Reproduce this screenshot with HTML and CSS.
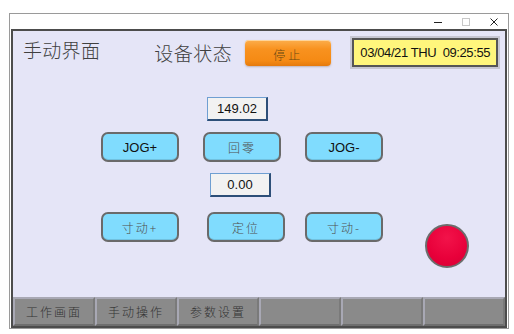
FILE: index.html
```html
<!DOCTYPE html>
<html lang="zh-CN">
<head>
  <meta charset="UTF-8">
  <title>手动界面</title>
  <link rel="stylesheet" href="styles.css">
</head>
<body>

<div class="window">
  <div class="titlebar">
    <svg class="tb-icon" width="10" height="10" viewBox="0 0 10 10"><line x1="1" y1="5.5" x2="9" y2="5.5" stroke="#222" stroke-width="1"/></svg>
    <svg class="tb-icon" width="10" height="10" viewBox="0 0 10 10"><rect x="1.5" y="1.5" width="7" height="7" fill="none" stroke="#c8c8c8" stroke-width="1"/></svg>
    <svg class="tb-icon" width="10" height="10" viewBox="0 0 10 10"><path d="M1.5 1.5 L8.5 8.5 M8.5 1.5 L1.5 8.5" stroke="#222" stroke-width="1"/></svg>
  </div>

  <div class="screen">
    <div class="top">
      <div class="page-title">手动界面</div>
      <div class="status-label">设备状态</div>
      <div class="status-btn">停止</div>
      <div class="clock-frame">
        <div class="clock">03/04/21 THU&nbsp;&nbsp;09:25:55</div>
      </div>
    </div>

    <div class="panel">
      <div class="row row-value1">
        <div class="value">149.02</div>
      </div>
      <div class="row row-jog">
        <div class="btn">JOG+</div>
        <div class="btn cn">回零</div>
        <div class="btn">JOG-</div>
      </div>
      <div class="row row-value2">
        <div class="value">0.00</div>
      </div>
      <div class="row row-inch">
        <div class="btn cn">寸动+</div>
        <div class="btn cn">定位</div>
        <div class="btn cn">寸动-</div>
        <div class="lamp"></div>
      </div>
    </div>

    <div class="tabs">
      <div class="tab">工作画面</div>
      <div class="tab">手动操作</div>
      <div class="tab">参数设置</div>
      <div class="tab"></div>
      <div class="tab"></div>
      <div class="tab"></div>
    </div>
  </div>
</div>

</body>
</html>
```

FILE: styles.css
```css
body {
  margin: 0;
  background: #ffffff;
  font-family: "Liberation Sans", Arial, "Noto Sans CJK SC", sans-serif;
}

.window {
  margin: 13px 0 0 9px;
  width: 498px;
  height: 314px;
  border: 1px solid #9a9a9a;
  background: #ffffff;
  display: flex;
  flex-direction: column;
}

.titlebar {
  height: 15px;
  display: flex;
  justify-content: flex-end;
  align-items: center;
  gap: 18px;
  padding-right: 9px;
}

.tb-icon {
  display: block;
}

.screen {
  flex: 1;
  margin: 0 1px;
  border: 2px solid #4c4c4c;
  background: #e5e5f7;
  display: flex;
  flex-direction: column;
}

/* header */
.top {
  height: 39px;
  display: flex;
  align-items: flex-start;
}

.page-title,
.status-label {
  font-family: "Noto Sans CJK SC", sans-serif;
  font-weight: 300;
  font-size: 19px;
  line-height: 22px;
  color: #404040;
}

.page-title {
  margin: 8px 0 0 10px;
  letter-spacing: 0.3px;
}

.status-label {
  margin: 11px 0 0 54px;
  letter-spacing: 0.5px;
}

.status-btn {
  margin: 9px 0 0 13px;
  width: 86px;
  height: 26px;
  border-radius: 4px;
  background: linear-gradient(#fcae4c, #f8921f 35%, #f58a14 80%, #e57a0c);
  box-shadow: 0 1px 2px rgba(120, 90, 60, 0.35), inset 0 1px 0 rgba(255, 230, 190, 0.7);
  display: flex;
  align-items: center;
  justify-content: center;
  padding-top: 2px;
  box-sizing: border-box;
  font-family: "Noto Sans CJK SC", sans-serif;
  font-weight: 300;
  font-size: 12px;
  letter-spacing: 3px;
  color: #6b4a12;
}

.clock-frame {
  margin: 5px 0 0 19px;
  padding: 2px;
  background: #c6c6d2;
}

.clock {
  width: 142px;
  height: 25px;
  border: 2px solid #555555;
  background: #fff67c;
  display: flex;
  align-items: center;
  justify-content: center;
  font-size: 13px;
  letter-spacing: -0.4px;
  color: #111;
}

/* controls */
.panel {
  padding-left: 88px;
  display: flex;
  flex-direction: column;
}

.row {
  display: flex;
  align-items: flex-start;
}

.row-value1 {
  margin: 27px 0 0 106px;
}

.row-jog {
  margin-top: 11px;
  gap: 24px;
}

.row-value2 {
  margin: 11px 0 0 109px;
}

.row-inch {
  margin-top: 15px;
}

.row-inch .btn:nth-child(2) {
  margin-left: 28px;
}

.row-inch .btn:nth-child(3) {
  margin-left: 20px;
}

.value {
  width: 58px;
  height: 21px;
  background: #f2f2f2;
  border-top: 1px solid #6f9fd2;
  border-left: 1px solid #6f9fd2;
  border-right: 2px solid #2d4f78;
  border-bottom: 2px solid #2d4f78;
  display: flex;
  align-items: center;
  justify-content: center;
  font-size: 13px;
  color: #111;
}

.btn {
  width: 74px;
  height: 26px;
  border: 2px solid #6a6a6a;
  border-radius: 7px;
  background: #80dcfe;
  box-shadow: inset 0 -1px 0 rgba(0, 0, 0, 0.12);
  display: flex;
  align-items: center;
  justify-content: center;
  font-size: 13px;
  color: #111;
}

.btn.cn {
  font-family: "Noto Sans CJK SC", sans-serif;
  font-weight: 300;
  font-size: 12px;
  letter-spacing: 2px;
  color: #505050;
}

.lamp {
  margin: 12px 0 0 42px;
  width: 40px;
  height: 40px;
  border: 2px solid #6c6c6c;
  border-radius: 50%;
  background: radial-gradient(circle at 50% 30%, #f2134a, #e8003a 60%, #d40034);
}

/* bottom navigation */
.tabs {
  margin-top: auto;
  height: 29px;
  display: grid;
  grid-template-columns: repeat(6, 1fr);
  background: #a6a6b2;
}

.tab {
  border: 2px solid #a8a8b4;
  border-right-color: #7a7a7a;
  border-bottom-color: #6e6e6e;
  background: #8a8a8a;
  display: flex;
  align-items: center;
  justify-content: center;
  font-family: "Noto Sans CJK SC", sans-serif;
  font-weight: 300;
  font-size: 12px;
  letter-spacing: 2px;
  color: #333333;
}
```
